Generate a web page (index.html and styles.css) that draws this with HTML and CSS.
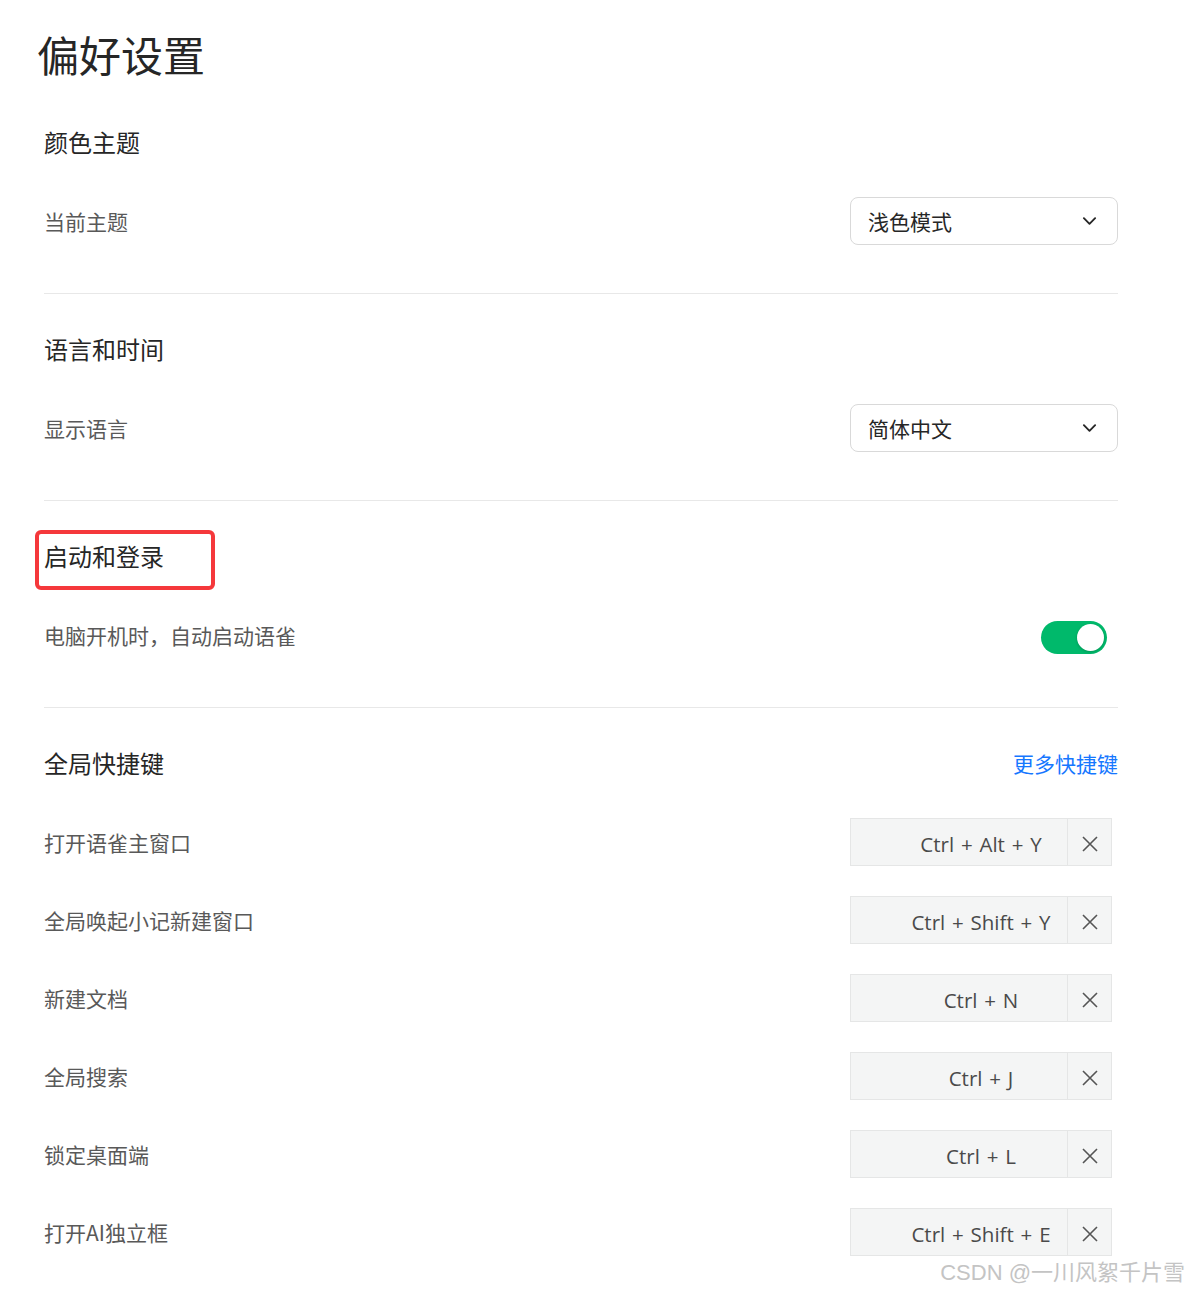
FILE: index.html
```html
<!DOCTYPE html>
<html lang="zh-CN">
<head>
  <meta charset="UTF-8">
  <meta name="viewport" content="width=device-width, initial-scale=1.0">
  <title>偏好设置</title>
  <link rel="stylesheet" href="styles.css">
</head>
<body>
  <div class="page">
    <h1 class="title">偏好设置</h1>

    <div class="section">
      <div class="section-head">
        <h3>颜色主题</h3>
      </div>
      <div class="row">
        <span class="label">当前主题</span>
        <div class="select">
          <span>浅色模式</span>
          <svg class="chevron" viewBox="0 0 16 10"><path d="M2 2l6 6 6-6" fill="none" stroke="#262626" stroke-width="2" stroke-linecap="round" stroke-linejoin="round"/></svg>
        </div>
      </div>
    </div>

    <div class="section">
      <div class="section-head">
        <h3>语言和时间</h3>
      </div>
      <div class="row">
        <span class="label">显示语言</span>
        <div class="select">
          <span>简体中文</span>
          <svg class="chevron" viewBox="0 0 16 10"><path d="M2 2l6 6 6-6" fill="none" stroke="#262626" stroke-width="2" stroke-linecap="round" stroke-linejoin="round"/></svg>
        </div>
      </div>
    </div>

    <div class="section">
      <div class="section-head">
        <h3 class="marked">启动和登录</h3>
      </div>
      <div class="row">
        <span class="label">电脑开机时，自动启动语雀</span>
        <div class="switch on"><span class="knob"></span></div>
      </div>
    </div>

    <div class="section last">
      <div class="section-head">
        <h3>全局快捷键</h3>
        <a class="more" href="#">更多快捷键</a>
      </div>
      <div class="shortcuts">
        <div class="row">
          <span class="label">打开语雀主窗口</span>
          <div class="hotkey"><span class="keys">Ctrl + Alt + Y</span><span class="clear"><svg viewBox="0 0 16 16"><path d="M1 1l14 14M15 1L1 15" stroke="#555" stroke-width="1.6"/></svg></span></div>
        </div>
        <div class="row">
          <span class="label">全局唤起小记新建窗口</span>
          <div class="hotkey"><span class="keys">Ctrl + Shift + Y</span><span class="clear"><svg viewBox="0 0 16 16"><path d="M1 1l14 14M15 1L1 15" stroke="#555" stroke-width="1.6"/></svg></span></div>
        </div>
        <div class="row">
          <span class="label">新建文档</span>
          <div class="hotkey"><span class="keys">Ctrl + N</span><span class="clear"><svg viewBox="0 0 16 16"><path d="M1 1l14 14M15 1L1 15" stroke="#555" stroke-width="1.6"/></svg></span></div>
        </div>
        <div class="row">
          <span class="label">全局搜索</span>
          <div class="hotkey"><span class="keys">Ctrl + J</span><span class="clear"><svg viewBox="0 0 16 16"><path d="M1 1l14 14M15 1L1 15" stroke="#555" stroke-width="1.6"/></svg></span></div>
        </div>
        <div class="row">
          <span class="label">锁定桌面端</span>
          <div class="hotkey"><span class="keys">Ctrl + L</span><span class="clear"><svg viewBox="0 0 16 16"><path d="M1 1l14 14M15 1L1 15" stroke="#555" stroke-width="1.6"/></svg></span></div>
        </div>
        <div class="row">
          <span class="label">打开AI独立框</span>
          <div class="hotkey"><span class="keys">Ctrl + Shift + E</span><span class="clear"><svg viewBox="0 0 16 16"><path d="M1 1l14 14M15 1L1 15" stroke="#555" stroke-width="1.6"/></svg></span></div>
        </div>
      </div>
    </div>
  </div>
  <div class="watermark">CSDN @一川风絮千片雪</div>
</body>
</html>
```

FILE: styles.css
```css
body {
  margin: 0;
  background: #fff;
  color: #262626;
  font-family: "Noto Sans CJK SC", "Noto Sans", sans-serif;
  min-height: 1291px;
  position: relative;
}
.page {
  width: 1074px;
  padding: 26px 0 0 44px;
}
.title {
  margin: 0 0 3px -7px;
  font-size: 42px;
  line-height: 56px;
  font-weight: 400;
  color: #262626;
}
.section {
  padding: 39px 0 48px 0;
  border-bottom: 1px solid #e8e8e8;
}
.section:first-of-type {
  padding-top: 41px;
}
.section.last {
  border-bottom: none;
}
.section-head {
  display: flex;
  align-items: center;
  justify-content: space-between;
  height: 32px;
  margin-bottom: 39px;
}
h3 {
  margin: 0;
  font-size: 24px;
  line-height: 32px;
  font-weight: 400;
  color: #262626;
  position: relative;
}
h3.marked::after {
  content: "";
  position: absolute;
  left: -9px;
  top: -10px;
  width: 172px;
  height: 52px;
  border: 4px solid #f5383b;
  border-radius: 6px;
}
.more {
  font-size: 21px;
  color: #1677ff;
  text-decoration: none;
}
.row {
  display: flex;
  align-items: center;
  justify-content: space-between;
  height: 48px;
}
.shortcuts {
  display: flex;
  flex-direction: column;
  gap: 30px;
}
.label {
  font-size: 21px;
  color: #595959;
}
.select {
  box-sizing: border-box;
  width: 268px;
  height: 48px;
  border: 1px solid #d9d9d9;
  border-radius: 8px;
  display: flex;
  align-items: center;
  justify-content: space-between;
  padding: 0 20px 0 17px;
  font-size: 21px;
  color: #262626;
}
.chevron {
  width: 15px;
  height: 10px;
}
.switch {
  width: 66px;
  height: 33px;
  border-radius: 17px;
  background: #bfbfbf;
  margin: 4px 11px 0 0;
  position: relative;
}
.switch.on {
  background: #00b96b;
}
.knob {
  position: absolute;
  top: 3px;
  right: 3px;
  width: 27px;
  height: 27px;
  border-radius: 50%;
  background: #fff;
  box-shadow: 0 1px 3px rgba(0,0,0,0.2);
}
.hotkey {
  box-sizing: border-box;
  width: 262px;
  height: 48px;
  margin-right: 6px;
  display: flex;
  background: #f4f5f5;
  border: 1px solid #e5e6e6;
}
.keys {
  flex: 1;
  display: flex;
  align-items: center;
  justify-content: center;
  padding: 3px 0 0 44px;
  font-family: "Open Sans", "Noto Sans", sans-serif;
  font-size: 20.5px;
  word-spacing: 1.5px;
  color: #4a4a4a;
  border-right: 1px solid #e5e6e6;
}
.clear {
  width: 43px;
  display: flex;
  align-items: center;
  justify-content: center;
}
.clear svg {
  width: 16px;
  height: 16px;
  margin-top: 4px;
}
.watermark {
  position: absolute;
  right: 4px;
  top: 1254px;
  font-family: "Liberation Sans", "Noto Sans CJK SC", sans-serif;
  font-size: 22px;
  color: #c4c4c4;
  text-shadow: 0 0 2px #fff;
}
```
